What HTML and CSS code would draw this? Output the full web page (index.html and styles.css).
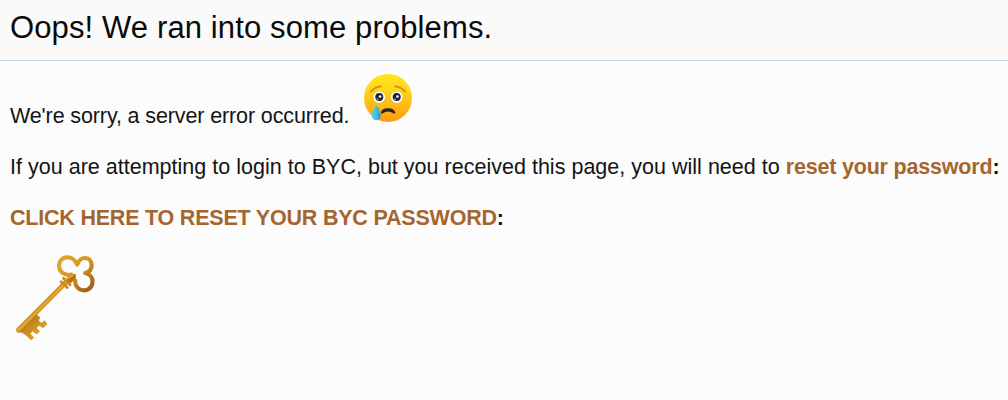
FILE: index.html
```html
<!DOCTYPE html>
<html lang="en">
<head>
<meta charset="utf-8">
<title>Oops! We ran into some problems.</title>
<link rel="stylesheet" href="styles.css">
</head>
<body>
<header class="title-bar"><h1 class="title">Oops! We ran into some problems.</h1></header>
<main class="message">
<div class="apology">
<p class="line sorry">We're sorry, a server error occurred.</p>
<svg class="emoji" viewBox="0 0 50 50" role="img" aria-label="Crying face">
<defs>
<linearGradient id="face" x1="0" y1="0" x2="0" y2="1"><stop offset="0" stop-color="#ffe31a"/><stop offset=".35" stop-color="#fdd51d"/><stop offset="1" stop-color="#ff9a12"/></linearGradient>
<linearGradient id="tear" x1="0" y1="0" x2="1" y2="0"><stop offset="0" stop-color="#55d2ec"/><stop offset=".5" stop-color="#40c0e5"/><stop offset="1" stop-color="#2597cc"/></linearGradient>
</defs>
<circle cx="25" cy="25" r="24" fill="url(#face)"/>
<path d="M8 18.5Q12 13.7 18 13.3M32 13.3Q38 13.7 42 18.5" fill="none" stroke="#cf8d18" stroke-width="1.7" stroke-linecap="round"/>
<circle cx="16.3" cy="24.2" r="5.8" fill="#fff"/><circle cx="33.7" cy="24.2" r="5.8" fill="#fff"/>
<circle cx="16.3" cy="24" r="4" fill="#1d2338"/><circle cx="33.7" cy="24" r="4" fill="#1d2338"/>
<circle cx="17.1" cy="23.5" r="1.3" fill="#fff"/><circle cx="34.5" cy="23.5" r="1.3" fill="#fff"/>
<circle cx="14.6" cy="26" r="1.1" fill="#78809a"/><circle cx="32" cy="26" r="1.1" fill="#78809a"/>
<path d="M17.8 40Q18.3 35.4 25 35.2Q31.7 35.4 32.3 40Q32.1 41.5 30.4 40.3Q25 36.8 19.7 40.3Q18 41.5 17.8 40Z" fill="#27232b"/>
<path d="M13.5 32.3Q8.8 38.5 8.8 42.3Q8.8 47.2 13.2 47.2Q18 47.2 17.7 42Q17.2 37.5 13.5 32.3Z" fill="url(#tear)"/>
</svg>
</div>
<p class="line detail">If you are attempting to login to BYC, but you received this page, you will need to <b class="strong-lower"><a class="link" href="#">reset your password</a>:</b></p>
<p class="line"><b class="strong-upper"><a class="link" href="#">CLICK HERE TO RESET YOUR BYC PASSWORD</a>:</b></p>
<svg class="key" viewBox="0 0 96 96" role="img" aria-label="Key">
<defs><linearGradient id="gold" gradientUnits="userSpaceOnUse" x1="50" y1="8" x2="84" y2="43"><stop offset="0" stop-color="#e4a62c"/><stop offset=".48" stop-color="#d6951f"/><stop offset="1" stop-color="#94581f"/></linearGradient>
<linearGradient id="shaft" gradientUnits="userSpaceOnUse" x1="31" y1="56" x2="36" y2="61"><stop offset="0" stop-color="#b86f0c"/><stop offset=".45" stop-color="#e9b137"/><stop offset="1" stop-color="#9d5c10"/></linearGradient>
<linearGradient id="bit" x1="0" y1="0" x2="1" y2="1"><stop offset="0" stop-color="#a8630d"/><stop offset="1" stop-color="#efb73a"/></linearGradient></defs>
<path d="M65 25C59 27.8 51 23.7 51 16.7C51 7.2 64.5 4.3 69.2 15.6C72.5 6 83.6 7.5 83.6 16C83.6 20.5 81 23.3 77.2 24.1C82 25 85 28.5 84.5 33.5C83.3 45 65.5 43.8 67.2 30" fill="none" stroke="url(#gold)" stroke-width="4.1" stroke-linejoin="round"/>
<path d="M27 64.5L32.3 68.2L30.8 71.6L33.5 74L36.7 71.2L39.3 75L35 79.2L31.2 76.6L28.6 79L32 82.6L28.6 85.6L24.8 82.3L22.4 84.7L26.3 88.4L23.2 91.2L17 85.4L13 83.6L10 83Z" fill="url(#bit)"/>
<path d="M59.6 31.6L10.2 81.3" stroke="url(#shaft)" stroke-width="4.8" stroke-linecap="round"/>
<path d="M67.5 24.5L56.5 30L61.5 35.5L68 29Z" fill="#b97216"/>
<path d="M53 32.7L59.2 38.6M55.6 29.3L62 35.8" stroke="#cd891e" stroke-width="2.8" stroke-linecap="round"/>
<path d="M57 31L65 26.4" stroke="#efb33a" stroke-width="1.2"/>
</svg>
</main>
</body>
</html>
```
FILE: styles.css
```css
* { box-sizing: border-box; }
body { margin: 0; background: #fcfcfc; color: #141414; font-family: "Liberation Sans", Arial, sans-serif; }
.title-bar { height: 61px; padding: 10px 10px 0; background: #fafafa; border-bottom: 1px solid #c8d8e4; }
.title { margin: 0; font-size: 31px; line-height: 36px; font-weight: 400; letter-spacing: .12px; white-space: nowrap; color: #0a0a0a; }
.message { display: flex; flex-direction: column; align-items: flex-start; padding: 12px 0 0 10px; }
.apology { display: flex; align-items: flex-end; gap: 13.5px; height: 56px; margin-bottom: 25px; }
.line { margin: 0 0 25px; font-size: 21.5px; line-height: 26px; white-space: nowrap; }
.sorry { margin: 0; letter-spacing: -.12px; }
.detail { letter-spacing: .015px; }
.strong-lower { letter-spacing: -.19px; }
.strong-upper { letter-spacing: -.21px; }
.emoji { width: 50px; height: 50px; margin-bottom: 6px; }
.link { color: #a5652e; text-decoration: none; }
.key { width: 96px; height: 96px; margin: -7px 0 0 -2px; }
```
